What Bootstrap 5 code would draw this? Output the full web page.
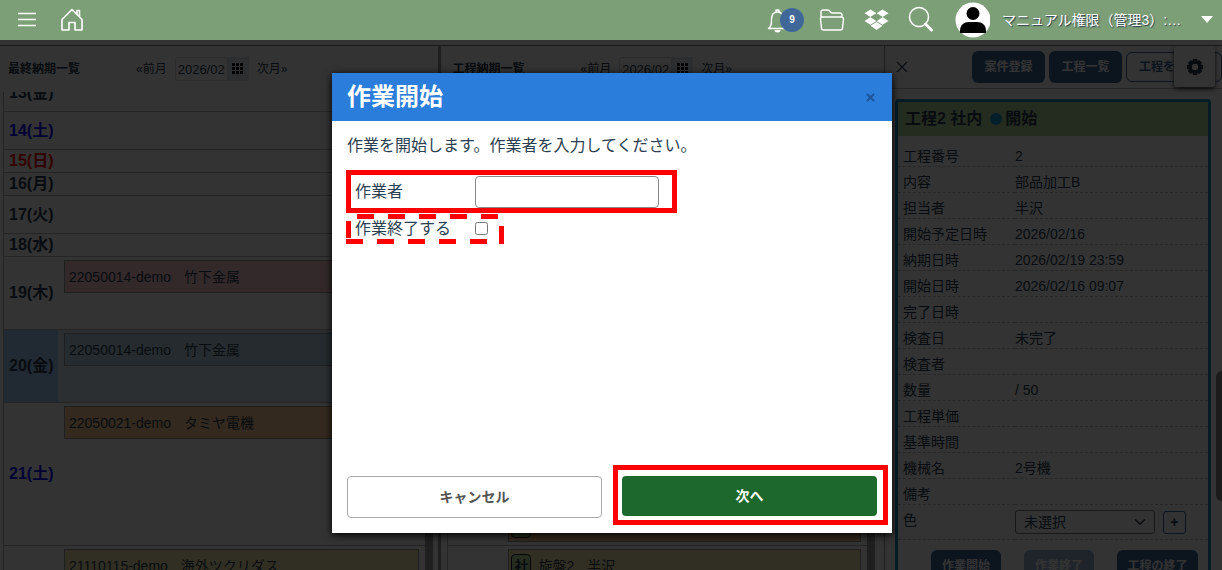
<!DOCTYPE html>
<html lang="ja">
<head>
<meta charset="utf-8">
<meta name="viewport" content="width=device-width, initial-scale=1">
<title>作業開始</title>
<link href="https://cdn.jsdelivr.net/npm/bootstrap@5.3.0/dist/css/bootstrap.min.css" rel="stylesheet">
<script src="https://cdn.jsdelivr.net/npm/bootstrap@5.3.0/dist/js/bootstrap.bundle.min.js" defer></script>
<style>
  body { font-family: "Liberation Sans", "Noto Sans CJK JP", sans-serif; font-size: 14px; line-height: 20px; color: #2c3e50; height: 100vh; }
  button { font-family: inherit; }
  a { color: inherit; text-decoration: none; }

  /* top bar */
  .topbar { background: #7c9f77; height: 40px; padding: 0 9px 0 13px; }
  .icon-btn { border: 0; background: none; padding: 0; width: 28px; height: 28px; }
  .icon-btn svg, .gear svg, .user-icon { display: block; }
  .alert-count { left: 14px; top: 2px; width: 24px; height: 24px; font-size: 10px; line-height: 24px; background: #3f6899; }
  .user-name { text-shadow: 1px 1px 1px #2c3e50; width: 191px; }

  /* schedule panes */
  .workspace { min-height: 0; border-top: 1px solid #888; margin-top: 5px; }
  .pane { flex: 441 1 0; min-width: 0; border-right: 3px solid #999; }
  .pane-list { flex: 442 1 0; padding-left: 3px; border-right-width: 1px; }
  .pane-side { flex: 339 1 0; min-width: 0; }
  .pane-head { height: 46px; padding-left: 8px; font-size: 12px; }
  .pane-head strong { width: 128px; }
  .month-box { width: 53px; height: 24px; border: 1px solid #ddd; padding: 0 2px; font-size: 13px; line-height: 20px; color: #2c3e50; border-radius: 3px 0 0 3px; }
  .month-btn { width: 21px; height: 24px; background: #d9e6ec; border: 0; padding: 0; }
  .month-btn svg { display: block; margin: auto; }
  .clip-days { min-height: 0; padding: 0 5px 0 3px; }
  .days { margin-top: -18px; border-left: 1px solid #bbb; border-collapse: separate; border-spacing: 0; }
  .days th { width: 54px; padding: 0 4px 0 5px; border-bottom: 1px solid #bbb; font-size: 16px; line-height: 18px; white-space: nowrap; vertical-align: middle; }
  .days td { padding: 3px 6px; border-bottom: 1px solid #bbb; vertical-align: top; }
  .days .last-fit { vertical-align: bottom; }
  .sat { color: #00f; }
  .sun { color: #f00; }
  .today th { background: #a5cdff; }
  .today td { background: #dcebf2; }
  .row-s { height: 23px; } .row-m { height: 38px; } .row-l { height: 73px; } .row-xl { height: 143px; }
  .track { width: 8px; background: #999; }
  .job { height: 33px; padding: 0 4px; border: 1px solid #999; gap: 13px; }
  .job-tag { width: 20px; height: 24px; border: 1px solid #222; border-radius: 4px; background: #b4dc9c; font-weight: bold; margin: 0 -6px 0 -2px; }
  .job-pink { background: #ffcdd2; } .job-blue { background: #b9d7e6; } .job-orange { background: #ffcd96; } .job-yellow { background: #f5ebaf; }

  /* detail pane */
  .side-head { height: 43px; padding-left: 11px; gap: 4px; border-bottom: 1px solid #bbb; }
  .btn-navy, .btn-navy:disabled { background: #3e6798; color: #fff; font-size: 12px; font-weight: bold; line-height: 20px; height: 32px; padding: 0; border: 0; opacity: 1; }
  .btn-navy:disabled { background: #9cb4d7; }
  .btn-edge { width: 96px; height: 30px; padding: 0 12px; font-size: 12px; line-height: 20px; border: 1px solid #3e6798; color: #3e6798; font-weight: bold; white-space: nowrap; text-align: left; }
  .btn-mid { width: 73px; }
  .btn-short { width: 70px; }
  .btn-long { width: 81px; }
  .gear { right: 7px; top: 0; width: 41px; height: 41px; border: 0; border-radius: 3px; background: #fff; box-shadow: 0 2px 5px #333; padding: 0; }
  .task { margin: 10px 11px 0 10px; border: 3px solid #008cc4; border-bottom: 0; border-radius: 4px 4px 0 0; }
  .task-head { background: #b4dc9c; height: 34px; padding-left: 7px; font-size: 16px; font-weight: bold; }
  .dot { width: 12px; height: 12px; background: #1496dc; margin: 0 3px 0 8px; }
  .fields { margin-top: 5px; border-collapse: separate; border-spacing: 0; }
  .fields th, .fields td { height: 26px; padding: 5px 5px 0; border-bottom: 1px dashed #c4c4c4; font-weight: normal; line-height: 20px; vertical-align: top; }
  .fields th { width: 117px; }
  .fields td { padding-left: 0; }
  .fields .tall { height: 35px; }
  .color-select { width: 140px; height: 24px; padding: 0 24px 0 8px; font-size: 14px; line-height: 20px; border: 1px solid #777; border-radius: 3px; color: #2c3e50; background-position: right 6px center; }
  .plus { width: 23px; height: 23px; border: 1px solid #3e6798; border-radius: 3px; background: none; color: #2c3e50; padding: 0; line-height: 18px; font-weight: bold; }
  .task-actions { gap: 23px; padding: 10px 0 0 33px; }
  .page-bar { width: 6px; height: 130px; right: 0; top: 325px; background: #888; }

  /* start dialog */
  .shade { top: 40px; right: 0; bottom: 0; left: 0; background: rgba(0,0,0,.8); padding-left: 2px; }
  .start-dialog { max-width: 560px; min-height: 460px; margin: 33px auto 0; background: #fff; box-shadow: 0 2px 8px #000; }
  .start-head { background: #2b7ddb; height: 48px; padding: 0 15px; }
  .start-head h1 { font-size: 24px; font-weight: bold; line-height: 32px; }
  .start-close { color: #1c5699; border: 0; background: none; padding: 0 2px 2px; line-height: 12px; }
  .start-body { padding: 15px 15px 0; font-size: 16px; line-height: 20px; }
  .mark-solid { border: 5px solid #f00; width: 331px; height: 43px; margin: 14px 0 0 -1px; padding-left: 4px; }
  .mark-dash { width: 158px; height: 31px; margin-left: -1px; padding-left: 9px; }
  .mark-dash svg { left: 0; top: 0; pointer-events: none; }
  .field-label { width: 120px; }
  .worker { width: 184px; height: 32px; border: 1px solid #888; border-radius: 4px; }
  .finish { width: 13px; height: 13px; margin: 0; }
  .start-foot { gap: 11px; padding: 0 4px 8px 15px; }
  .cancel { flex: 1 1 255px; height: 42px; margin-top: 11px; border: 1px solid #aaa; border-radius: 4px; color: #555; font-size: 14px; font-weight: bold; background: #fff; }
  .mark-next { flex: 1 1 275px; border: 5px solid #f00; padding: 6px 6px 4px 4px; }
  .next { height: 40px; border: 0; border-radius: 4px; background: #1d682c; color: #fff; font-size: 14px; font-weight: bold; }
</style>
</head>
<body class="d-flex flex-column overflow-hidden position-relative">

<header class="topbar d-flex align-items-center flex-shrink-0 text-white">
  <button class="icon-btn" aria-label="メニュー"><svg width="28" height="28" fill="none" stroke="#fff" stroke-width="1.4"><path d="M5 7.500h18M5 13.500h18M5 19.500h18"/></svg></button>
  <a href="#" class="icon-btn ms-3" aria-label="ホーム"><svg width="30" height="28" fill="none" stroke="#fff" stroke-width="1.6" stroke-linejoin="round"><path d="M5 13.500 15 3.500l10 10V24h-7v-7.500h-6V24H5zM20 8V4.500h2.500v6.500"/></svg></a>
  <div class="d-flex align-items-center ms-auto">
    <button class="icon-btn position-relative me-4" aria-label="通知">
      <svg width="28" height="28" fill="none" stroke="#fff" stroke-width="1.4" stroke-linejoin="round"><path d="M2.500 22.500c3-2 3-5 3-9 0-5 2-7.500 6-7.500s6 2.500 6 7.500c0 4 0 7 3 9zM10 6V4h3v2"/><path d="M8.500 24h6a3 2.500 0 0 1-6 0z" fill="#fff" stroke="none"/></svg>
      <span class="alert-count position-absolute rounded-circle text-white fw-bold">9</span>
    </button>
    <button class="icon-btn me-3" aria-label="フォルダ"><svg width="28" height="28" fill="none" stroke="#fff" stroke-width="1.4" stroke-linejoin="round"><path d="M3 12V6q0-2 2-2h5q1 0 2 1.500T14 7h8q2 0 2 2v3M4 11h19q2.500 0 2.500 2l-1 9q0 2-2 2h-17q-2 0-2-2l-1-9q0-2 1.500-2z"/></svg></button>
    <button class="icon-btn me-3" aria-label="Dropbox"><svg width="28" height="28" fill="#fff"><path d="m8.500 3.500 6 3.800-6 3.800-6-3.800zm12 0 6 3.800-6 3.800-6-3.800zm-12 7.600 6 3.800-6 3.800-6-3.800zm12 0 6 3.800-6 3.800-6-3.800zm-6 4.800 6 3.800-6 4.200-6-4.200z"/><path d="m14.500 7.300 6 3.800-6 3.800-6-3.800z" fill="#7c9f77"/></svg></button>
    <button class="icon-btn me-3" aria-label="検索"><svg width="28" height="28" fill="none" stroke="#fff"><circle cx="13" cy="11" r="9.500" stroke-width="1.500"/><path d="m19.500 18 6 6" stroke-width="3" stroke-linecap="round"/></svg></button>
    <svg class="user-icon ms-1 me-2" width="36" height="36" aria-hidden="true"><circle cx="20" cy="18" r="17.500" fill="#fff" transform="translate(-1)"/><circle cx="19" cy="11.500" r="6.500"/><path d="M6 31v-2c0-6 4-9 9-9h8c5 0 9 3 9 9v2z"/></svg>
    <span class="user-name text-nowrap ms-1">マニュアル権限（管理3）:…</span>
    <button class="icon-btn d-flex align-items-center justify-content-end w-auto ms-2" aria-label="アカウント"><svg width="12" height="8" fill="#fff"><path d="M0 0h12L6 7z"/></svg></button>
  </div>
</header>

<main class="workspace d-flex flex-grow-1 position-relative">
  <section class="pane d-flex flex-column">
    <div class="pane-head d-flex align-items-center flex-shrink-0">
      <strong>最終納期一覧</strong>
      <a href="#" class="me-2">«前月</a>
      <input class="month-box" value="2026/02" aria-label="最終納期の月">
      <button class="month-btn me-2" aria-label="月を選択"><svg width="12" height="12"><path d="M0 0h3v3H0zM4 0h3v3H4zM8 0h3v3H8zM0 4h3v3H0zM4 4h3v3H4zM8 4h3v3H8zM0 8h3v3H0zM4 8h3v3H4zM8 8h3v3H8z"/></svg></button>
      <a href="#">次月»</a>
    </div>
    <div class="clip-days d-flex flex-grow-1 overflow-hidden">
      <div class="flex-grow-1">
        <table class="days w-100">
          <tr class="row-m"><th>13(金)</th><td></td></tr>
          <tr class="row-m"><th class="sat">14(土)</th><td></td></tr>
          <tr class="row-s"><th class="sun">15(日)</th><td></td></tr>
          <tr class="row-s"><th>16(月)</th><td></td></tr>
          <tr class="row-m"><th>17(火)</th><td></td></tr>
          <tr class="row-s"><th>18(水)</th><td></td></tr>
          <tr class="row-l"><th>19(木)</th><td><div class="job job-pink d-flex align-items-center"><span>22050014-demo</span><span>竹下金属</span></div></td></tr>
          <tr class="row-l today"><th>20(金)</th><td><div class="job job-blue d-flex align-items-center"><span>22050014-demo</span><span>竹下金属</span></div></td></tr>
          <tr class="row-xl"><th class="sat">21(土)</th><td><div class="job job-orange d-flex align-items-center"><span>22050021-demo</span><span>タミヤ電機</span></div></td></tr>
          <tr class="row-l"><th></th><td><div class="job job-yellow d-flex align-items-center"><span>21110115-demo</span><span>海外ツクリダス</span></div></td></tr>
        </table>
      </div>
      <div class="track flex-shrink-0"></div>
    </div>
  </section>

  <section class="pane pane-list d-flex flex-column">
    <div class="pane-head d-flex align-items-center flex-shrink-0">
      <strong>工程納期一覧</strong>
      <a href="#" class="me-2">«前月</a>
      <input class="month-box" value="2026/02" aria-label="工程納期の月">
      <button class="month-btn me-2" aria-label="月を選択"><svg width="12" height="12"><path d="M0 0h3v3H0zM4 0h3v3H4zM8 0h3v3H8zM0 4h3v3H0zM4 4h3v3H4zM8 4h3v3H8zM0 8h3v3H0zM4 8h3v3H4zM8 8h3v3H8z"/></svg></button>
      <a href="#">次月»</a>
    </div>
    <div class="clip-days d-flex flex-grow-1 overflow-hidden">
      <div class="flex-grow-1">
        <table class="days w-100">
          <tr class="row-m"><th></th><td></td></tr>
          <tr class="row-m"><th></th><td></td></tr>
          <tr class="row-s"><th></th><td></td></tr>
          <tr class="row-s"><th></th><td></td></tr>
          <tr class="row-m"><th></th><td></td></tr>
          <tr class="row-s"><th></th><td></td></tr>
          <tr class="row-l"><th></th><td></td></tr>
          <tr class="row-l"><th></th><td></td></tr>
          <tr class="row-xl"><th></th><td class="last-fit"><div class="job job-orange d-flex align-items-center"><span class="job-tag"></span></div></td></tr>
          <tr class="row-l"><th></th><td><div class="job job-yellow d-flex align-items-center"><span class="job-tag d-flex align-items-center justify-content-center">社</span><span>旋盤2</span><span>半沢</span></div></td></tr>
        </table>
      </div>
      <div class="track flex-shrink-0 me-1"></div>
    </div>
  </section>

  <section class="pane-side position-relative overflow-hidden">
    <div class="side-head d-flex align-items-center">
      <button class="icon-btn w-auto me-auto" aria-label="閉じる"><svg width="12" height="12" stroke="#2c3e50" stroke-width="1.200"><path d="m1 1 10 10M11 1 1 11"/></svg></button>
      <button class="btn btn-navy btn-mid">案件登録</button>
      <button class="btn btn-navy btn-mid">工程一覧</button>
      <button class="btn btn-edge">工程を追加</button>
    </div>
    <button class="gear position-absolute d-flex align-items-center justify-content-center" aria-label="設定"><svg width="16" height="16" viewBox="-8 -8 16 16"><g fill="#2c3e50"><path id="tooth" d="M-2-8h4l1 4h-6zM-2 8h4l1-4h-6zM-8-2v4l4 1v-6zM8-2v4l-4 1v-6z"/><use href="#tooth" transform="rotate(45)"/></g><circle r="4.500" fill="none" stroke="#2c3e50" stroke-width="3"/><circle r="3" fill="#fff"/></svg></button>

    <div class="task">
      <div class="task-head d-flex align-items-center">工程2 社内<span class="dot rounded-circle"></span>開始</div>
      <table class="fields w-100">
        <tr><th>工程番号</th><td>2</td></tr>
        <tr><th>内容</th><td>部品加工B</td></tr>
        <tr><th>担当者</th><td>半沢</td></tr>
        <tr><th>開始予定日時</th><td>2026/02/16</td></tr>
        <tr><th>納期日時</th><td>2026/02/19 23:59</td></tr>
        <tr><th>開始日時</th><td>2026/02/16 09:07</td></tr>
        <tr><th>完了日時</th><td></td></tr>
        <tr><th>検査日</th><td>未完了</td></tr>
        <tr><th>検査者</th><td></td></tr>
        <tr><th>数量</th><td>/ 50</td></tr>
        <tr><th>工程単価</th><td></td></tr>
        <tr><th>基準時間</th><td></td></tr>
        <tr><th>機械名</th><td>2号機</td></tr>
        <tr><th>備考</th><td></td></tr>
        <tr><th class="tall"><label for="color">色</label></th><td class="tall"><div class="d-flex align-items-center"><select id="color" class="form-select color-select me-2"><option>未選択</option></select><button class="plus" aria-label="色を追加">+</button></div></td></tr>
      </table>
      <div class="task-actions d-flex">
        <button class="btn btn-navy btn-short">作業開始</button>
        <button class="btn btn-navy btn-short" disabled>作業終了</button>
        <button class="btn btn-navy btn-long">工程の終了</button>
      </div>
    </div>
    <div class="page-bar position-absolute rounded-start"></div>
  </section>
</main>

<div class="shade position-absolute">
  <form class="start-dialog d-flex flex-column" role="dialog" aria-labelledby="start-title">
    <div class="start-head d-flex align-items-center justify-content-between">
      <h1 id="start-title" class="m-0 text-white">作業開始</h1>
      <button type="button" class="start-close" aria-label="閉じる"><svg width="9" height="9" stroke="currentColor" stroke-width="2"><path d="m1 1 7 7M8 1 1 8"/></svg></button>
    </div>
    <div class="start-body flex-grow-1">
      <p class="m-0">作業を開始します。作業者を入力してください。</p>
      <div class="mark-solid d-flex align-items-center">
        <label class="field-label" for="worker">作業者</label>
        <input id="worker" class="worker" type="text">
      </div>
      <div class="mark-dash d-flex align-items-center position-relative">
        <label class="field-label" for="finish">作業終了する</label>
        <input id="finish" class="finish" type="checkbox">
        <svg class="position-absolute" width="158" height="32" fill="none" stroke="#f00" stroke-width="5"><path d="M11 3.500h141M0 28.500h141" stroke-dasharray="17 14"/><path d="M2.500 8v17M155.500 13v18"/></svg>
      </div>
    </div>
    <div class="start-foot d-flex align-items-start">
      <button type="button" class="cancel">キャンセル</button>
      <div class="mark-next"><button type="submit" class="next w-100 d-block">次へ</button></div>
    </div>
  </form>
</div>

</body>
</html>
